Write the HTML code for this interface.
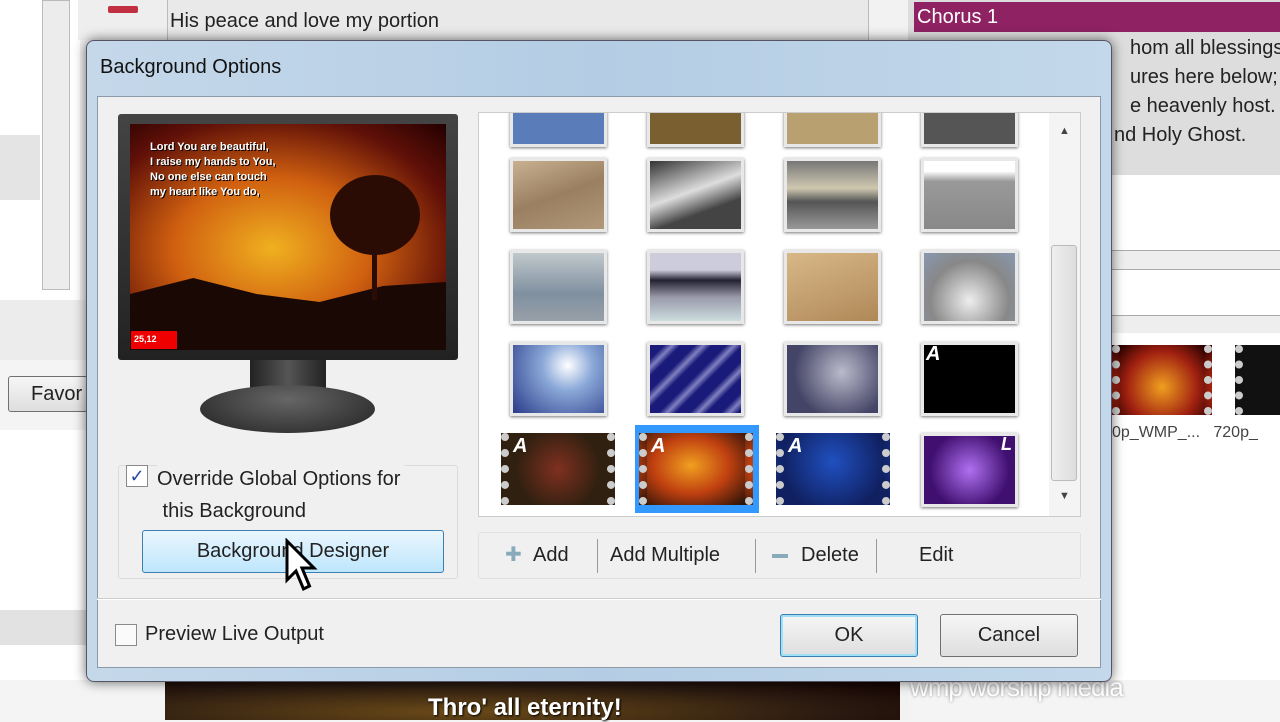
<!DOCTYPE html>
<html><head><meta charset="utf-8">
<style>
*{margin:0;padding:0;box-sizing:border-box}
body{width:1280px;height:720px;overflow:hidden;background:#f4f4f4;position:relative;font-family:"Liberation Sans",sans-serif;color:#222}
.a{position:absolute}
.th{position:absolute;width:97px;height:74px;border:3px solid #e8e8e8;box-shadow:0 1px 3px #777}
.film{position:absolute;width:114px;height:72px;background:#111;border-left:8px dotted #ccc;border-right:8px dotted #ccc}
.film i{position:absolute;left:4px;top:2px;color:#fff;font-weight:bold;font-style:italic;font-size:20px}
.btn{position:absolute;border:1px solid #707070;border-radius:3px;background:linear-gradient(#f6f6f6,#dedede);font-size:20px;text-align:center}
</style></head><body>
<!-- background app -->
<div class="a" style="left:0;top:0;width:80px;height:300px;background:#fff"></div>
<div class="a" style="left:42;top:0;width:30px"></div>
<div class="a" style="left:42px;top:0;width:28px;height:290px;background:#ececec;border:1px solid #bbb"></div>
<div class="a" style="left:0;top:135px;width:40px;height:65px;background:#e4e4e4"></div>
<div class="a" style="left:0;top:300px;width:90px;height:60px;background:#ececec"></div>
<div class="a" style="left:0;top:430px;width:90px;height:250px;background:#fff"></div>
<div class="a" style="left:0;top:610px;width:90px;height:35px;background:#e2e2e2"></div>
<div class="btn" style="left:8px;top:376px;width:90px;height:36px;line-height:34px;text-align:left;padding-left:22px">Favor</div>
<div class="a" style="left:78px;top:0;width:90px;height:40px;background:#eee;border-right:1px solid #bbb"></div>
<div class="a" style="left:108px;top:6px;width:30px;height:7px;background:#c03040;border-radius:2px"></div>
<div class="a" style="left:168px;top:0;width:700px;height:40px;background:#e9e9e9"></div>
<div class="a" style="left:170px;top:10px;font-size:20px;color:#222">His peace and love my portion</div>
<div class="a" style="left:868px;top:0;width:40px;height:720px;background:#f2f2f2;border-left:1px solid #bbb"></div>
<div class="a" style="left:908px;top:0;width:372px;height:175px;background:#ddd"></div>
<div class="a" style="left:914px;top:2px;width:366px;height:30px;background:#8e2262;color:#fff;font-size:20px;padding-left:3px;line-height:30px">Chorus 1</div>
<div class="a" style="left:1100px;top:34px;font-size:20px;line-height:29px;color:#222;white-space:nowrap">
<div style="padding-left:30px">hom all blessings</div><div style="padding-left:30px">ures here below;</div><div style="padding-left:30px">e heavenly host.</div><div style="padding-left:14px">nd Holy Ghost.</div></div>
<div class="a" style="left:908px;top:175px;width:372px;height:505px;background:#fff"></div>
<div class="a" style="left:1100px;top:250px;width:180px;height:20px;border-top:1px solid #aaa;border-bottom:1px solid #aaa;background:#eee"></div>
<div class="a" style="left:1100px;top:315px;width:180px;height:18px;border-top:1px solid #aaa;background:#eee"></div>
<div class="film" style="left:1112px;top:345px;width:100px;height:70px;background:radial-gradient(circle at 50% 60%,#f0a020,#a02010 60%,#200)"></div>
<div class="film" style="left:1235px;top:345px;width:60px;height:70px"></div>
<div class="a" style="left:1112px;top:424px;font-size:16px;color:#444">0p_WMP_...&nbsp;&nbsp;&nbsp;720p_</div>
<!-- bottom image -->
<div class="a" style="left:165px;top:680px;width:735px;height:40px;background:radial-gradient(ellipse at 40% 80%,#6a4a18,#2a1a10 60%,#100)"></div>
<div class="a" style="left:428px;top:694px;font-size:24px;font-weight:bold;color:#fff;text-shadow:1px 1px 2px #000">Thro' all eternity!</div>
<div class="a" style="left:910px;top:672px;font-size:26px;color:#fff;text-shadow:0 0 3px #888;letter-spacing:-1px">wmp worship media</div>
<!-- dialog -->
<div class="a" style="left:86px;top:40px;width:1026px;height:642px;border-radius:8px;background:linear-gradient(90deg,#c5d8ea,#b4cde4 50%,#c3d8ea);border:1px solid #556;box-shadow:0 0 12px rgba(0,0,0,.6)"></div>
<div class="a" style="left:100px;top:56px;font-size:20px;color:#111">Background Options</div>
<div class="a" style="left:97px;top:96px;width:1004px;height:572px;background:#f0f0f0;border:1px solid #8a9aaa"></div>
<!-- monitor -->
<div class="a" style="left:118px;top:114px;width:340px;height:246px;background:linear-gradient(#444,#222);border-radius:3px"></div>
<div class="a" style="left:130px;top:124px;width:316px;height:226px;background:radial-gradient(ellipse at 45% 55%,#f0b020,#d06010 40%,#601008 75%,#200)"></div>
<div class="a" style="left:130px;top:270px;width:316px;height:80px;background:#1a0804;clip-path:polygon(0 30%,20% 10%,40% 30%,60% 40%,80% 20%,100% 15%,100% 100%,0 100%)"></div>
<div class="a" style="left:330px;top:175px;width:90px;height:80px;border-radius:50%;background:#2a0c04"></div>
<div class="a" style="left:372px;top:240px;width:5px;height:60px;background:#2a0c04"></div>
<div class="a" style="left:150px;top:140px;font-size:11px;font-weight:bold;color:#fff;line-height:15px;text-shadow:1px 1px 0 #000">Lord You are beautiful,<br>I raise my hands to You,<br>No one else can touch<br>my heart like You do,</div>
<div class="a" style="left:131px;top:331px;width:46px;height:18px;background:#e00;color:#fff;font-size:9px;font-weight:bold;padding:3px">25,12</div>
<div class="a" style="left:250px;top:360px;width:76px;height:35px;background:linear-gradient(90deg,#222,#555,#222)"></div>
<div class="a" style="left:200px;top:385px;width:175px;height:48px;border-radius:50%;background:radial-gradient(ellipse at 50% 30%,#666,#222)"></div>
<!-- group -->
<div class="a" style="left:118px;top:465px;width:340px;height:114px;border:1px solid #dcdcdc;border-radius:3px"></div>
<div class="a" style="left:126px;top:465px;width:22px;height:22px;background:#fff;border:1px solid #8a8a8a;color:#2a4aa0;font-size:18px;line-height:20px;text-align:center">✓</div>
<div class="a" style="left:157px;top:463px;font-size:20px;line-height:32px;background:#f0f0f0;padding-right:4px">Override Global Options for<br>&nbsp;this Background</div>
<div class="btn" style="left:142px;top:530px;width:302px;height:43px;line-height:41px;background:linear-gradient(#eaf6fd,#bee6fd);border-color:#3c7fb1">Background Designer</div>
<svg class="a" style="left:284px;top:538px" width="36" height="54" viewBox="0 0 12 18"><path d="M1 1 L1 14 L4 11 L6.5 17 L8.5 16 L6 10 L10 10 Z" fill="#fff" stroke="#000" stroke-width="1"/></svg>
<!-- gallery -->
<div class="a" style="left:478px;top:112px;width:603px;height:405px;background:#fff;border:1px solid #ccc;overflow:hidden">
 <div class="th" style="left:31px;top:-40px;background:#5a7cb8"></div>
 <div class="th" style="left:168px;top:-40px;background:#7a6030"></div>
 <div class="th" style="left:305px;top:-40px;background:#b8a070"></div>
 <div class="th" style="left:442px;top:-40px;background:#555"></div>
 <div class="th" style="left:31px;top:45px;background:linear-gradient(160deg,#c8b090,#9a8060 50%,#b09878)"></div>
 <div class="th" style="left:168px;top:45px;background:linear-gradient(160deg,#333,#ddd 45%,#444 70%)"></div>
 <div class="th" style="left:305px;top:45px;background:linear-gradient(#777,#cfc8b0 40%,#555 60%,#999)"></div>
 <div class="th" style="left:442px;top:45px;background:linear-gradient(#fff 15%,#999 30%,#888)"></div>
 <div class="th" style="left:31px;top:137px;background:linear-gradient(#c0c8cc,#8090a0 60%,#98a0a8)"></div>
 <div class="th" style="left:168px;top:137px;background:linear-gradient(#ccd 25%,#223 40%,#99a 65%,#cdd)"></div>
 <div class="th" style="left:305px;top:137px;background:linear-gradient(160deg,#d8b888,#b08858)"></div>
 <div class="th" style="left:442px;top:137px;background:radial-gradient(circle at 50% 70%,#eee,#888 60%,#8898b0)"></div>
 <div class="th" style="left:31px;top:229px;background:radial-gradient(circle at 60% 30%,#fff,#8aa8d8 35%,#2a3a88)"></div>
 <div class="th" style="left:168px;top:229px;background:repeating-linear-gradient(135deg,#1a1a7a 0 10px,#8080c0 16px,#1a1a7a 22px)"></div>
 <div class="th" style="left:305px;top:229px;background:radial-gradient(circle at 60% 40%,#bbc,#446 70%)"></div>
 <div class="th" style="left:442px;top:229px;background:#000"><i style="color:#fff;font-weight:bold;font-size:20px;position:absolute;left:2px;top:-2px">A</i></div>
 <div class="a" style="left:156px;top:312px;width:124px;height:88px;background:#3399ff"></div>
 <div class="film" style="left:22px;top:320px;background:radial-gradient(circle at 50% 50%,#803020,#302010 70%)"><i>A</i></div>
 <div class="film" style="left:160px;top:320px;background:radial-gradient(ellipse at 45% 45%,#f0a020,#c04010 50%,#201008)"><i>A</i></div>
 <div class="film" style="left:297px;top:320px;background:radial-gradient(circle at 50% 40%,#2050c0,#102060 80%)"><i>A</i></div>
 <div class="th" style="left:442px;top:320px;background:radial-gradient(circle at 50% 50%,#b070f0,#401070 70%)"><i style="color:#fff;font-weight:bold;font-size:18px;position:absolute;right:3px;top:-2px">L</i></div>
 <div class="a" style="left:570px;top:0;width:32px;height:405px;background:#f4f4f4"></div>
 <div class="a" style="left:572px;top:132px;width:26px;height:236px;background:linear-gradient(90deg,#eee,#ddd);border:1px solid #bbb;border-radius:3px"></div>
 <div class="a" style="left:580px;top:12px;font-size:11px;color:#444">▲</div>
 <div class="a" style="left:580px;top:377px;font-size:11px;color:#444">▼</div>
</div>
<!-- toolbar -->
<div class="a" style="left:478px;top:532px;width:603px;height:47px;border:1px solid #e0e0e0;border-radius:3px;font-size:20px;line-height:45px">
 <span class="a" style="left:26px;color:#8ab">✚</span><span class="a" style="left:54px">Add</span>
 <span class="a" style="left:118px;top:6px;height:34px;border-left:1px solid #999"></span>
 <span class="a" style="left:131px">Add Multiple</span>
 <span class="a" style="left:276px;top:6px;height:34px;border-left:1px solid #999"></span>
 <span class="a" style="left:293px;top:21px;width:16px;height:4px;background:#8ab"></span><span class="a" style="left:322px">Delete</span>
 <span class="a" style="left:397px;top:6px;height:34px;border-left:1px solid #999"></span>
 <span class="a" style="left:440px">Edit</span>
</div>
<div class="a" style="left:97px;top:598px;width:1004px;height:2px;border-top:1px solid #ccc;border-bottom:1px solid #fff"></div>
<div class="a" style="left:115px;top:624px;width:22px;height:22px;background:#fafafa;border:1px solid #8a8a8a"></div>
<div class="a" style="left:145px;top:623px;font-size:20px">Preview Live Output</div>
<div class="btn" style="left:780px;top:614px;width:138px;height:43px;line-height:41px;border-color:#3c7fb1;box-shadow:inset 0 0 0 2px #9fe0f8">OK</div>
<div class="btn" style="left:940px;top:614px;width:138px;height:43px;line-height:41px">Cancel</div>
</body></html>
